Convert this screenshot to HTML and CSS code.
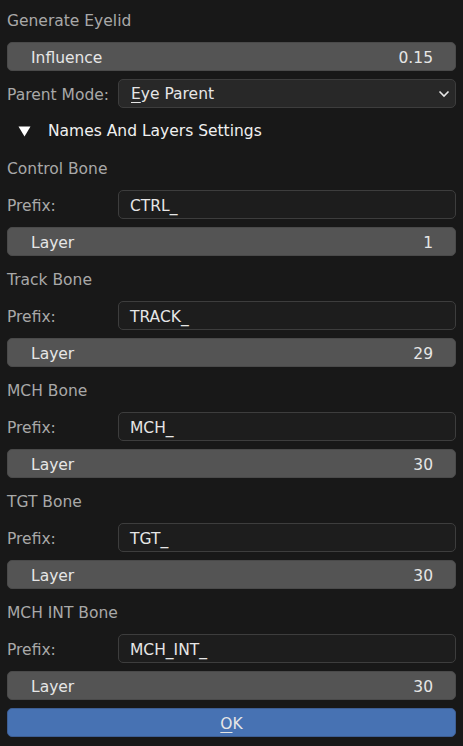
FILE: index.html
```html
<!DOCTYPE html>
<html>
<head>
<meta charset="utf-8">
<link rel="stylesheet" href="styles.css">
</head>
<body>
<div class="dialog">
  <div class="row label">Generate Eyelid</div>
  <div class="row slider"><span>Influence</span><span>0.15</span></div>
  <div class="row split">
    <span class="label">Parent Mode:</span>
    <div class="menu"><span><u>E</u>ye Parent</span>
      <svg class="chev" width="12" height="8" viewBox="0 0 12 8"><path d="M1.5 1.5 L6 6 L10.5 1.5" fill="none" stroke="#e6e6e6" stroke-width="1.6"/></svg>
    </div>
  </div>
  <div class="row panel">
    <svg class="tri" width="13" height="11" viewBox="0 0 13 11"><path d="M0.5 0.5 H12.5 L6.5 10.5 Z" fill="#ffffff"/></svg>
    <span>Names And Layers Settings</span>
  </div>

  <div class="row label">Control Bone</div>
  <div class="row split"><span class="label">Prefix:</span><div class="field">CTRL_</div></div>
  <div class="row slider"><span>Layer</span><span>1</span></div>

  <div class="row label">Track Bone</div>
  <div class="row split"><span class="label">Prefix:</span><div class="field">TRACK_</div></div>
  <div class="row slider"><span>Layer</span><span>29</span></div>

  <div class="row label">MCH Bone</div>
  <div class="row split"><span class="label">Prefix:</span><div class="field">MCH_</div></div>
  <div class="row slider"><span>Layer</span><span>30</span></div>

  <div class="row label">TGT Bone</div>
  <div class="row split"><span class="label">Prefix:</span><div class="field">TGT_</div></div>
  <div class="row slider"><span>Layer</span><span>30</span></div>

  <div class="row label">MCH INT Bone</div>
  <div class="row split"><span class="label">Prefix:</span><div class="field">MCH_INT_</div></div>
  <div class="row slider"><span>Layer</span><span>30</span></div>

  <div class="row ok"><span><u>O</u>K</span></div>
</div>
</body>
</html>
```
FILE: styles.css
```css
html, body {
  margin: 0;
  padding: 0;
  background: #181818;
}
body {
  font-family: "DejaVu Sans", sans-serif;
  font-size: 15.5px;
  color: #e6e6e6;
}
.dialog {
  width: 463px;
  height: 746px;
  box-sizing: border-box;
  padding: 5px 7px 0 7px;
  display: flex;
  flex-direction: column;
  gap: 8px;
}
.row {
  height: 29px;
  box-sizing: border-box;
  display: flex;
  align-items: center;
  flex: none;
  padding-top: 3px;
}
.label {
  color: #a8a8a8;
}
.slider {
  background: #545454;
  border: 1px solid #4a4a4a;
  border-radius: 5px;
  justify-content: space-between;
  padding: 3px 22px 0 23px;
}
.split {
  display: grid;
  grid-template-columns: 111px 1fr;
  align-items: center;
  padding-top: 0;
}
.split > .label {
  padding-top: 3px;
}
.menu, .field {
  height: 29px;
  box-sizing: border-box;
  border: 1px solid #3d3d3d;
  border-radius: 5px;
  display: flex;
  align-items: center;
  padding-top: 3px;
}
.menu {
  background: #282828;
  padding: 1px 5px 0 12px;
  justify-content: space-between;
}
.field {
  background: #1d1d1d;
  padding-left: 11px;
  padding-right: 11px;
}
u {
  text-decoration: underline;
  text-underline-offset: 3px;
  text-decoration-thickness: 1px;
}
.chev {
  display: block;
}
.panel {
  padding-left: 11px;
  padding-top: 1px;
  gap: 17px;
  color: #f0f0f0;
}
.tri {
  display: block;
}
.ok {
  background: #4772b3;
  border: 1px solid #3d5e94;
  border-radius: 5px;
  justify-content: center;
  height: 29px;
}
```
